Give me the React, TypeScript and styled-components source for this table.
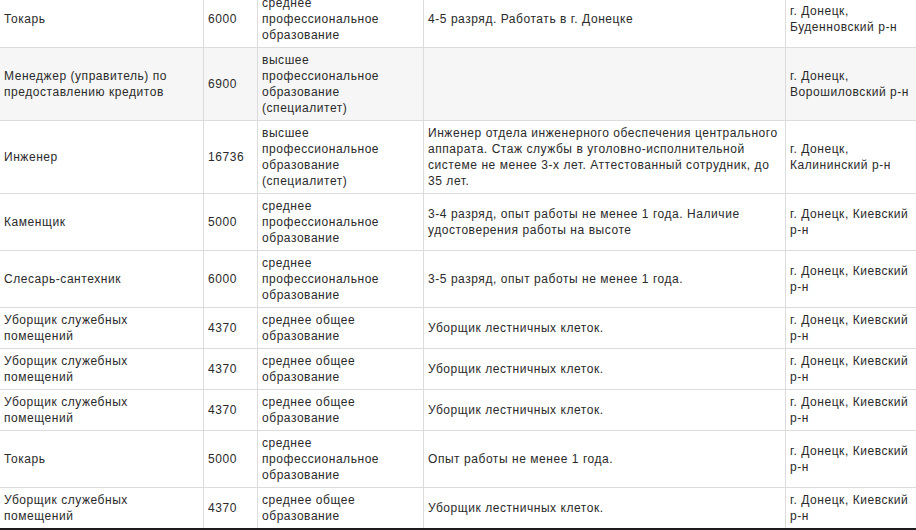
import React from "react";
import styled, { createGlobalStyle } from "styled-components";

const GlobalStyle = createGlobalStyle`
  html, body {
    margin: 0;
    padding: 0;
    background: #ffffff;
    overflow: hidden;
  }
  * { box-sizing: border-box; }
`;

type Vacancy = {
  title: string;
  salary: string;
  education: string;
  requirements: string;
  location: string;
  shaded?: boolean;
};

const vacancies: Vacancy[] = [
  {
    title: "Токарь",
    salary: "6000",
    education: "среднее профессиональное образование",
    requirements: "4-5 разряд. Работать в г. Донецке",
    location: "г. Донецк, Буденновский р-н",
  },
  {
    title: "Менеджер (управитель) по предоставлению кредитов",
    salary: "6900",
    education: "высшее профессиональное образование (специалитет)",
    requirements: "",
    location: "г. Донецк, Ворошиловский р-н",
    shaded: true,
  },
  {
    title: "Инженер",
    salary: "16736",
    education: "высшее профессиональное образование (специалитет)",
    requirements:
      "Инженер отдела инженерного обеспечения центрального аппарата. Стаж службы в уголовно-исполнительной системе не менее 3-х лет. Аттестованный сотрудник, до 35 лет.",
    location: "г. Донецк, Калининский р-н",
  },
  {
    title: "Каменщик",
    salary: "5000",
    education: "среднее профессиональное образование",
    requirements:
      "3-4 разряд, опыт работы не менее 1 года. Наличие удостоверения работы на высоте",
    location: "г. Донецк, Киевский р-н",
  },
  {
    title: "Слесарь-сантехник",
    salary: "6000",
    education: "среднее профессиональное образование",
    requirements: "3-5 разряд, опыт работы не менее 1 года.",
    location: "г. Донецк, Киевский р-н",
  },
  {
    title: "Уборщик служебных помещений",
    salary: "4370",
    education: "среднее общее образование",
    requirements: "Уборщик лестничных клеток.",
    location: "г. Донецк, Киевский р-н",
  },
  {
    title: "Уборщик служебных помещений",
    salary: "4370",
    education: "среднее общее образование",
    requirements: "Уборщик лестничных клеток.",
    location: "г. Донецк, Киевский р-н",
  },
  {
    title: "Уборщик служебных помещений",
    salary: "4370",
    education: "среднее общее образование",
    requirements: "Уборщик лестничных клеток.",
    location: "г. Донецк, Киевский р-н",
  },
  {
    title: "Токарь",
    salary: "5000",
    education: "среднее профессиональное образование",
    requirements: "Опыт работы не менее 1 года.",
    location: "г. Донецк, Киевский р-н",
  },
  {
    title: "Уборщик служебных помещений",
    salary: "4370",
    education: "среднее общее образование",
    requirements: "Уборщик лестничных клеток.",
    location: "г. Донецк, Киевский р-н",
  },
];

const Table = styled.div`
  width: 916px;
  margin-top: -9px;
  font-family: "Liberation Sans", Arial, sans-serif;
  font-size: 12px;
  letter-spacing: 0.55px;
  line-height: 16px;
  color: #2a2a2a;
`;

const Row = styled.div<{ $shaded?: boolean; $last?: boolean }>`
  display: grid;
  grid-template-columns: 204px 54px 166px 362px 130px;
  background: ${(p) => (p.$shaded ? "#f6f6f6" : "#ffffff")};
  border-bottom: ${(p) => (p.$last ? "2px solid #1c1c1c" : "1px solid #dcdcdc")};
`;

const Cell = styled.div<{ $last?: boolean }>`
  display: flex;
  align-items: center;
  padding: 4px;
  border-right: ${(p) => (p.$last ? "none" : "1px solid #dcdcdc")};
  min-width: 0;
`;

export default function App() {
  return (
    <>
      <GlobalStyle />
      <Table>
        {vacancies.map((v, i) => (
          <Row key={i} $shaded={v.shaded} $last={i === vacancies.length - 1}>
            <Cell>{v.title}</Cell>
            <Cell>{v.salary}</Cell>
            <Cell>{v.education}</Cell>
            <Cell>{v.requirements}</Cell>
            <Cell $last>{v.location}</Cell>
          </Row>
        ))}
      </Table>
    </>
  );
}
